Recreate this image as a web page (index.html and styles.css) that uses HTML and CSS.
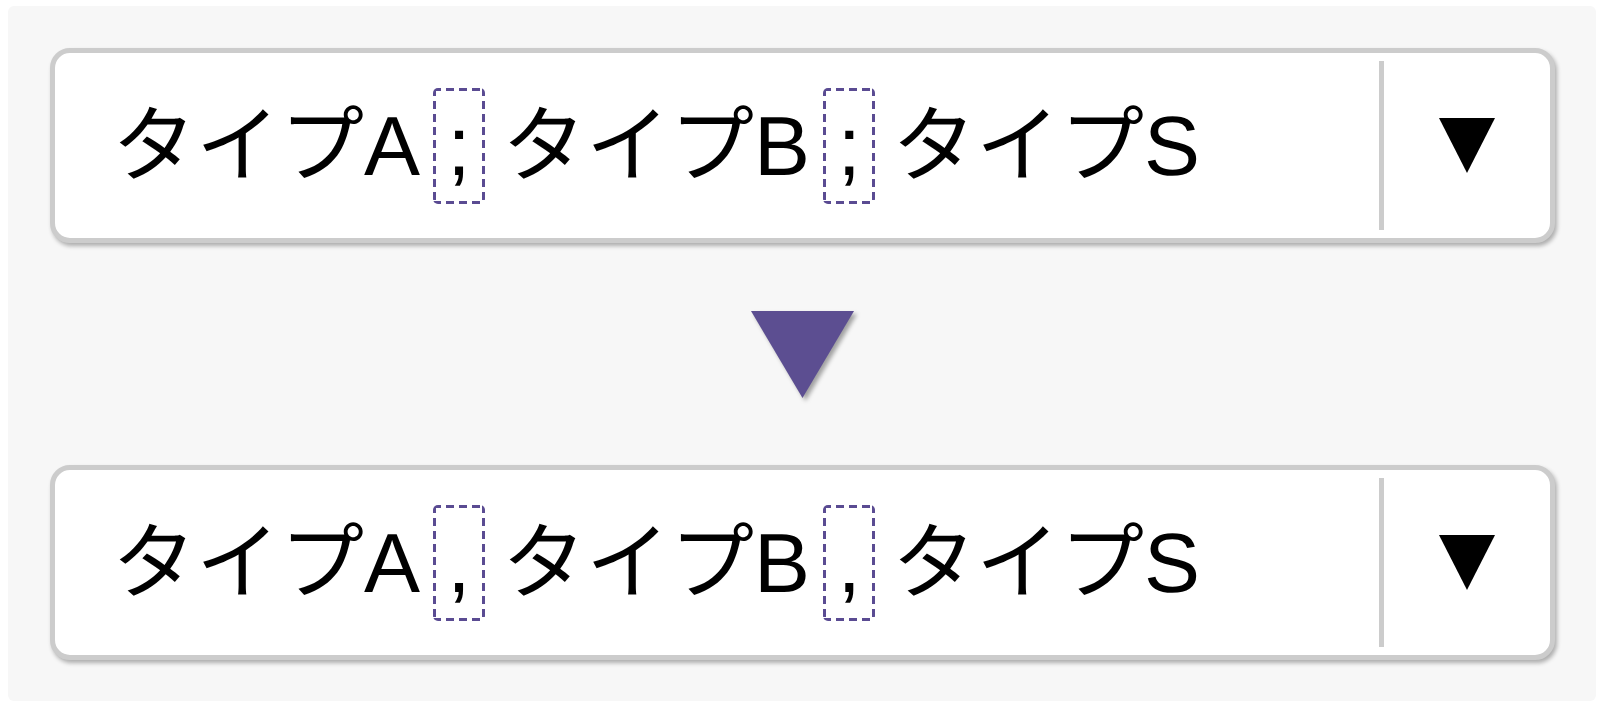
FILE: index.html
```html
<!DOCTYPE html>
<html lang="ja">
<head>
<meta charset="utf-8">
<title>Separator</title>
<link rel="stylesheet" href="styles.css">
</head>
<body>
<div class="panel">
  <div class="select">
    <div class="value">
      <span class="word">タイプA</span><span class="sep">;</span><span class="word">タイプB</span><span class="sep">;</span><span class="word">タイプS</span>
    </div>
    <div class="divider"></div>
    <div class="toggle"><svg width="56" height="55" viewBox="0 0 56 55"><polygon points="0,0 56,0 28,55" fill="#000"/></svg></div>
  </div>
  <div class="arrow"><svg width="103" height="87" viewBox="0 0 103 87"><polygon points="0,0 103,0 51.5,87" fill="#5c4e91"/></svg></div>
  <div class="select">
    <div class="value">
      <span class="word">タイプA</span><span class="sep">,</span><span class="word">タイプB</span><span class="sep">,</span><span class="word">タイプS</span>
    </div>
    <div class="divider"></div>
    <div class="toggle"><svg width="56" height="55" viewBox="0 0 56 55"><polygon points="0,0 56,0 28,55" fill="#000"/></svg></div>
  </div>
</div>
</body>
</html>
```

FILE: styles.css
```css
html, body {
  background: #ffffff;
}
body {
  margin: 6px 8px 8px;
}
.panel {
  background: #f7f7f7;
  border-radius: 6px;
  padding: 42px 41px 41px 42px;
  display: flex;
  flex-direction: column;
}
.select {
  height: 195px;
  box-sizing: border-box;
  border: 5px solid #cccccc;
  border-radius: 20px;
  background: #ffffff;
  box-shadow: 2px 3px 4px rgba(0, 0, 0, 0.3);
  display: flex;
  align-items: stretch;
}
.value {
  flex: 1;
  display: flex;
  align-items: center;
  padding-left: 57px;
  font-family: "Liberation Sans", "Noto Sans CJK JP", sans-serif;
  font-size: 84px;
  line-height: 1;
  color: #000000;
  white-space: nowrap;
  text-rendering: geometricPrecision;
}
.sep {
  box-sizing: border-box;
  width: 52px;
  height: 116px;
  border-radius: 5px;
  display: flex;
  align-items: center;
  justify-content: center;
  margin: 0 17px 0 13px;
  background:
    repeating-linear-gradient(90deg, #5a4b92 0 8px, transparent 8px 13px) left top / 100% 3px no-repeat,
    repeating-linear-gradient(90deg, #5a4b92 0 8px, transparent 8px 13px) left bottom / 100% 3px no-repeat,
    repeating-linear-gradient(180deg, #5a4b92 0 8px, transparent 8px 13px) left top / 3px 100% no-repeat,
    repeating-linear-gradient(180deg, #5a4b92 0 8px, transparent 8px 13px) right top / 3px 100% no-repeat;
}
.divider {
  width: 5px;
  background: #cccccc;
  margin: 8px 0;
}
.toggle {
  width: 166px;
  display: flex;
  align-items: center;
  justify-content: center;
}
.arrow {
  height: 222px;
  display: flex;
  align-items: center;
  justify-content: center;
}
.arrow svg {
  filter: drop-shadow(3px 3px 2px rgba(0, 0, 0, 0.35));
}
```
